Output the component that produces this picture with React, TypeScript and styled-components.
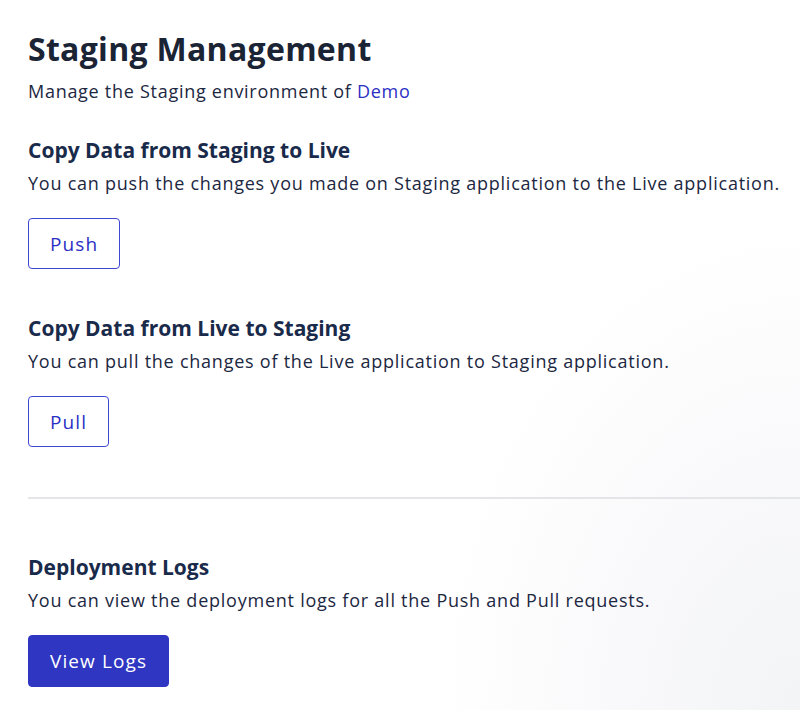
import React from "react";
import styled, { createGlobalStyle } from "styled-components";

const Global = createGlobalStyle`
  html, body { margin: 0; padding: 0; }
  body {
    width: 800px;
    min-height: 710px;
    font-family: "Open Sans", "Noto Sans", sans-serif;
    background: radial-gradient(ellipse 360px 480px at 100% 100%, #f3f4f6 0%, #f9f9fb 50%, #ffffff 100%);
    overflow: hidden;
  }
`;

const Page = styled.main`
  display: flex;
  flex-direction: column;
  padding: 29px 0 0 28px;
  min-height: 710px;
  box-sizing: border-box;
`;

const Title = styled.h1`
  margin: 0;
  font-size: 32px;
  line-height: 40px;
  font-weight: 700;
  color: #1b2434;
  letter-spacing: 0.3px;
`;

const Subtitle = styled.p`
  margin: 9px 0 0;
  font-size: 18px;
  line-height: 26px;
  letter-spacing: 0.72px;
  color: #1c2741;
`;

const Link = styled.a`
  color: #2b30c4;
  text-decoration: none;
`;

const Section = styled.section<{ $gap: number }>`
  display: flex;
  flex-direction: column;
  align-items: flex-start;
  margin-top: ${(p) => p.$gap}px;
`;

const Heading = styled.h2`
  margin: 0;
  font-size: 21px;
  line-height: 30px;
  font-weight: 700;
  color: #192a4a;
`;

const Desc = styled.p`
  margin: 4px 0 0;
  font-size: 18px;
  line-height: 28px;
  letter-spacing: 0.76px;
  color: #1c2741;
`;

const Button = styled.button<{ $primary?: boolean }>`
  margin-top: 21px;
  height: ${(p) => (p.$primary ? 52 : 51)}px;
  padding: 0 21px;
  border-radius: 4px;
  font-family: inherit;
  font-size: 19px;
  letter-spacing: 1.1px;
  cursor: pointer;
  border: 1.5px solid ${(p) => (p.$primary ? "#2e36c2" : "#3d47d4")};
  background: ${(p) => (p.$primary ? "#2e36c2" : "#ffffff")};
  color: ${(p) => (p.$primary ? "#ffffff" : "#2b30c4")};
`;

const Divider = styled.hr`
  align-self: stretch;
  margin: 50px 0 0;
  border: none;
  border-top: 2px solid #e3e5e9;
`;

export default function App() {
  return (
    <>
      <Global />
      <Page>
        <Title>Staging Management</Title>
        <Subtitle>
          Manage the Staging environment of <Link href="#">Demo</Link>
        </Subtitle>

        <Section $gap={31}>
          <Heading>Copy Data from Staging to Live</Heading>
          <Desc>
            You can push the changes you made on Staging application to the Live application.
          </Desc>
          <Button>Push</Button>
        </Section>

        <Section $gap={44}>
          <Heading>Copy Data from Live to Staging</Heading>
          <Desc>You can pull the changes of the Live application to Staging application.</Desc>
          <Button>Pull</Button>
        </Section>

        <Divider />

        <Section $gap={53}>
          <Heading>Deployment Logs</Heading>
          <Desc>You can view the deployment logs for all the Push and Pull requests.</Desc>
          <Button $primary>View Logs</Button>
        </Section>
      </Page>
    </>
  );
}
